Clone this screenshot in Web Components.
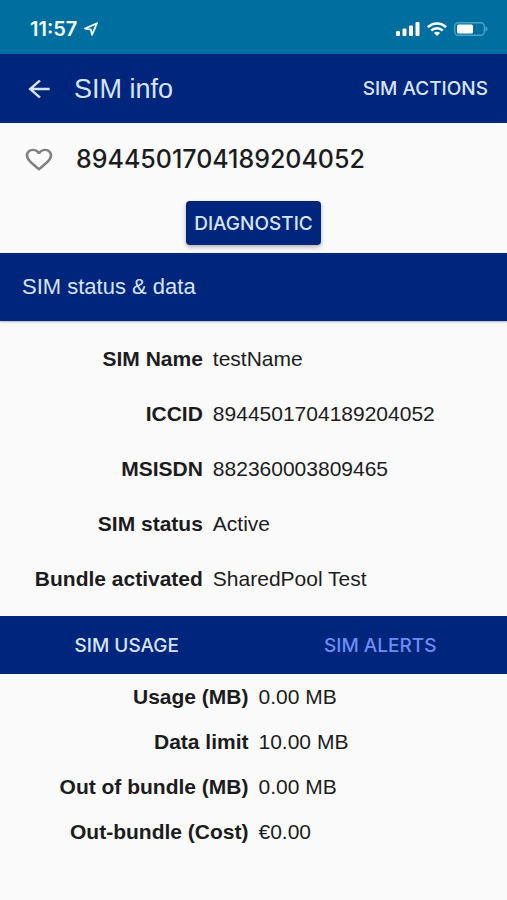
<!DOCTYPE html>
<html lang="en">
<head>
<meta charset="UTF-8">
<meta name="viewport" content="width=device-width, initial-scale=1.0">
<title>SIM info</title>
<style>
  body {
    --navy: #00257c;
    --on-navy: #d6e4ff;
    --medium-font: Inter, "Liberation Sans", Arial, sans-serif;
    margin: 0;
    min-height: 100vh;
    background: #fafafa;
    color: #1c1c1e;
    font-family: "Liberation Sans", Arial, sans-serif;
    font-size: 21px;
    line-height: 24px;
  }
</style>
</head>
<body>
  <status-bar>11:57</status-bar>
  <app-header>
    SIM info
    <span slot="action">SIM ACTIONS</span>
  </app-header>
  <main>
    <sim-title>8944501704189204052</sim-title>
    <raised-button>DIAGNOSTIC</raised-button>
    <section-bar>SIM status &amp; data</section-bar>
    <data-list>
      <dt>SIM Name</dt><dd>testName</dd>
      <dt>ICCID</dt><dd>8944501704189204052</dd>
      <dt>MSISDN</dt><dd>882360003809465</dd>
      <dt>SIM status</dt><dd>Active</dd>
      <dt>Bundle activated</dt><dd>SharedPool Test</dd>
    </data-list>
    <tab-bar>
      <span slot="first">SIM USAGE</span>
      <span slot="second">SIM ALERTS</span>
    </tab-bar>
    <data-list compact>
      <dt>Usage (MB)</dt><dd>0.00 MB</dd>
      <dt>Data limit</dt><dd>10.00 MB</dd>
      <dt>Out of bundle (MB)</dt><dd>0.00 MB</dd>
      <dt>Out-bundle (Cost)</dt><dd>€0.00</dd>
    </data-list>
  </main>

<script>
class StatusBar extends HTMLElement {
  connectedCallback() {
    this.attachShadow({ mode: 'open' });
    this.shadowRoot.innerHTML = `
      <style>
        :host {
          display: flex;
          justify-content: space-between;
          align-items: center;
          box-sizing: border-box;
          height: 54px;
          padding: 4px 19px 0 30px;
          background: #006f9f;
          color: #f2fbff;
          font-family: var(--medium-font);
          font-size: 20px;
          font-weight: 600;
        }

        div {
          display: flex;
          align-items: center;
          gap: 7px;
        }

        svg {
          display: block;
        }
      </style>

      <div>
        <span><slot></slot></span>
        <svg width="14" height="14" viewBox="0 0 14 14" fill="none" stroke="currentColor" stroke-width="1.8" stroke-linejoin="round" aria-hidden="true">
          <path d="M13 1.200 1 6.600l5.800.8L8 12.800z"/>
        </svg>
      </div>
      <div>
        <svg width="24" height="14" viewBox="0 0 24 14" fill="#fff" aria-hidden="true">
          <rect x="0" y="9" width="4" height="5" rx="1"/>
          <rect x="6.500" y="6.500" width="4" height="7.500" rx="1"/>
          <rect x="13" y="3.500" width="4" height="10.500" rx="1"/>
          <rect x="19.500" y="0" width="4" height="14" rx="1"/>
        </svg>
        <svg width="20" height="14" viewBox="0 0 20 14" fill="none" stroke="#fff" stroke-width="2.600" aria-hidden="true">
          <path d="M1 5.200C6 .2 14 .2 19 5.200M4.300 8.700c3.200-3.200 8.200-3.200 11.400 0"/>
          <path d="M10 13.900 6.900 10.900c1.800-1.600 4.400-1.600 6.200 0z" fill="#fff" stroke="none"/>
        </svg>
        <svg width="34" height="14" viewBox="0 0 34 14" aria-hidden="true">
          <rect x=".7" y=".7" width="29.600" height="12.600" rx="3.500" fill="none" stroke="#4aa3c8" stroke-width="1.400"/>
          <rect x="3" y="2.500" width="16" height="9" rx="1.500" fill="#fff"/>
          <path d="M31.500 4.600c2.800.8 2.800 4 0 4.800z" fill="#4aa3c8"/>
        </svg>
      </div>
    `;
  }
}

class AppHeader extends HTMLElement {
  connectedCallback() {
    this.attachShadow({ mode: 'open' });
    this.shadowRoot.innerHTML = `
      <style>
        :host {
          display: block;
          background: var(--navy);
          color: var(--on-navy);
        }

        header {
          display: flex;
          align-items: center;
          gap: 19px;
          height: 69px;
          padding: 0 19px 0 23px;
        }

        h1 {
          flex: 1;
          margin: 0;
          font-size: 27px;
          font-weight: 400;
          line-height: 32px;
        }

        button {
          padding: 0;
          border: 0;
          background: none;
          color: inherit;
          font-family: var(--medium-font);
          font-size: 19px;
          font-weight: 500;
          cursor: pointer;
        }

        svg {
          display: block;
        }
      </style>

      <header>
        <button aria-label="Back">
          <svg width="32" height="28" viewBox="0 0 24 24" preserveAspectRatio="none" fill="currentColor">
            <path d="M20 11H7.830l5.590-5.590L12 4l-8 8 8 8 1.410-1.410L7.830 13H20v-2z"/>
          </svg>
        </button>
        <h1><slot></slot></h1>
        <button><slot name="action"></slot></button>
      </header>
    `;
  }
}

class SimTitle extends HTMLElement {
  connectedCallback() {
    this.attachShadow({ mode: 'open' });
    this.shadowRoot.innerHTML = `
      <style>
        :host {
          display: flex;
          align-items: center;
          gap: 21px;
          height: 72px;
          padding: 0 23px;
        }

        button {
          padding: 0;
          border: 0;
          background: none;
          color: #808080;
          cursor: pointer;
        }

        svg {
          display: block;
        }

        h2 {
          margin: 0;
          font-family: var(--medium-font);
          font-size: 25px;
          font-weight: 500;
          line-height: 32px;
        }
      </style>

      <button aria-label="Add to favourites">
        <svg width="32" height="29" viewBox="0 0 24 24" preserveAspectRatio="none" fill="currentColor">
          <path d="M16.500 3c-1.740 0-3.410.81-4.500 2.090C10.910 3.810 9.240 3 7.500 3 4.420 3 2 5.420 2 8.500c0 3.780 3.400 6.860 8.550 11.540L12 21.350l1.450-1.320C18.600 15.360 22 12.280 22 8.500 22 5.420 19.580 3 16.500 3zm-4.400 15.550l-.1.100-.1-.1C7.140 14.240 4 11.390 4 8.500 4 6.500 5.500 5 7.500 5c1.540 0 3.040.99 3.570 2.360h1.870C13.460 5.990 14.960 5 16.500 5c2 0 3.500 1.500 3.500 3.500 0 2.890-3.140 5.740-7.900 10.050z"/>
        </svg>
      </button>
      <h2><slot></slot></h2>
    `;
  }
}

class RaisedButton extends HTMLElement {
  connectedCallback() {
    this.attachShadow({ mode: 'open' });
    this.shadowRoot.innerHTML = `
      <style>
        :host {
          display: flex;
          justify-content: center;
          padding: 6px 0 8px;
        }

        button {
          height: 44px;
          padding: 0 8px;
          border: 0;
          border-radius: 4px;
          background: var(--navy);
          box-shadow: 0 2px 4px rgba(0, 0, 0, 0.3);
          color: var(--on-navy);
          font-family: var(--medium-font);
          font-size: 19px;
          font-weight: 500;
          cursor: pointer;
        }
      </style>

      <button><slot></slot></button>
    `;
  }
}

class SectionBar extends HTMLElement {
  connectedCallback() {
    this.attachShadow({ mode: 'open' });
    this.shadowRoot.innerHTML = `
      <style>
        :host {
          display: flex;
          align-items: center;
          height: 68px;
          padding: 0 22px;
          background: var(--navy);
          box-shadow: 0 1px 2px rgba(0, 0, 0, 0.3);
          color: var(--on-navy);
        }

        h3 {
          margin: 0;
          font-size: 22px;
          font-weight: 400;
        }
      </style>

      <h3><slot></slot></h3>
    `;
  }
}

class DataList extends HTMLElement {
  connectedCallback() {
    this.attachShadow({ mode: 'open' });
    this.shadowRoot.innerHTML = `
      <style>
        :host {
          display: block;
          padding: 10px 0;
        }

        :host([compact]) {
          padding: 0;
        }

        dl {
          display: grid;
          grid-template-columns: 41% 1fr;
          grid-auto-rows: 55px;
          align-items: center;
          margin: 0;
        }

        :host([compact]) dl {
          grid-template-columns: 1fr 1fr;
          grid-auto-rows: 45px;
        }

        ::slotted(dt) {
          padding-right: 5px;
          font-weight: 700;
          text-align: right;
        }

        ::slotted(dd) {
          margin: 0;
          padding-left: 5px;
        }
      </style>

      <dl><slot></slot></dl>
    `;
  }
}

class TabBar extends HTMLElement {
  connectedCallback() {
    this.attachShadow({ mode: 'open' });
    this.shadowRoot.innerHTML = `
      <style>
        :host {
          display: block;
          background: var(--navy);
        }

        div {
          display: grid;
          grid-template-columns: 1fr 1fr;
          height: 58px;
        }

        button {
          padding: 0;
          border: 0;
          background: none;
          color: #6f8cf5;
          font-family: var(--medium-font);
          font-size: 19px;
          font-weight: 500;
          cursor: pointer;
        }

        button[aria-selected="true"] {
          color: var(--on-navy);
        }
      </style>

      <div role="tablist">
        <button role="tab" aria-selected="true"><slot name="first"></slot></button>
        <button role="tab" aria-selected="false"><slot name="second"></slot></button>
      </div>
    `;

    const tabs = this.shadowRoot.querySelectorAll('button');
    tabs.forEach(tab => {
      tab.addEventListener('click', () => {
        tabs.forEach(other => other.setAttribute('aria-selected', other === tab));
      });
    });
  }
}

customElements.define('status-bar', StatusBar);
customElements.define('app-header', AppHeader);
customElements.define('sim-title', SimTitle);
customElements.define('raised-button', RaisedButton);
customElements.define('section-bar', SectionBar);
customElements.define('data-list', DataList);
customElements.define('tab-bar', TabBar);
</script>
</body>
</html>
